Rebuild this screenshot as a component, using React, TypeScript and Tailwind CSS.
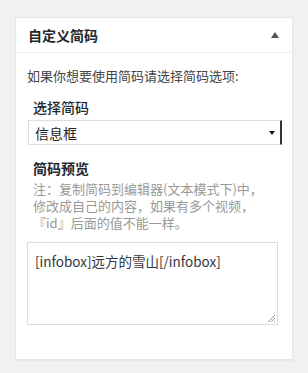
import React from "react";

const font = { fontFamily: '"Noto Sans CJK SC", "Noto Sans", sans-serif' };

export default function App() {
  return (
    <div className="w-[308px] h-[373px] bg-[#f1f1f1] pt-[17px] pl-[15px]" style={font}>
      <div className="w-[278px] h-[343px] bg-white border border-[#e5e5e5] shadow-[0_1px_1px_rgba(0,0,0,0.04)]">
        {/* header */}
        <div className="h-[35px] flex items-center justify-between pl-[12px] pr-[13px] border-b border-[#eeeeee]">
          <span className="text-[14px] font-semibold text-[#23282d] leading-none">自定义简码</span>
          <svg width="8" height="6" viewBox="0 0 8 6">
            <path d="M4 0 L8 6 L0 6 Z" fill="#555" />
          </svg>
        </div>

        {/* body */}
        <div className="pl-[11px] pr-[14px] pt-[14px]">
          <p className="text-[13px] text-[#444] leading-[18px]">如果你想要使用简码请选择简码选项:</p>

          <div className="mt-[13px] pl-[6px] text-[14px] font-medium text-[#23282d] leading-[18px]">选择简码</div>
          <div className="mt-[4px] ml-[1px] w-[254px] h-[25px] flex items-center justify-between bg-white border border-[#dddddd] border-r-[2px] border-r-[#333] pl-[6px] pr-[5px]">
            <span className="text-[14px] text-[#222] leading-none">信息框</span>
            <svg width="6" height="4" viewBox="0 0 6 4">
              <path d="M0 0 L6 0 L3 4 Z" fill="#111" />
            </svg>
          </div>

          <div className="mt-[14px] pl-[6px] text-[14px] font-semibold text-[#23282d] leading-[18px]">简码预览</div>
          <div className="mt-[3px] pl-[6px] text-[13px] text-[#999] leading-[17px]">
            <div>注：复制简码到编辑器(文本模式下)中，</div>
            <div>修改成自己的内容，如果有多个视频，</div>
            <div>『id』后面的值不能一样。</div>
          </div>

          <div className="mt-[11px] w-[251px] h-[83px] border border-[#dddddd] relative pl-[7px] pt-[5px]">
            <span className="text-[13.5px] text-[#32373c] leading-[18px]">[infobox]远方的雪山[/infobox]</span>
            <svg className="absolute right-[1px] bottom-[1px]" width="10" height="10" viewBox="0 0 10 10">
              <path d="M9 2 L2 9 M9 5 L5 9 M9 8 L8 9" stroke="#999" strokeWidth="1" />
            </svg>
          </div>
        </div>
      </div>
    </div>
  );
}
